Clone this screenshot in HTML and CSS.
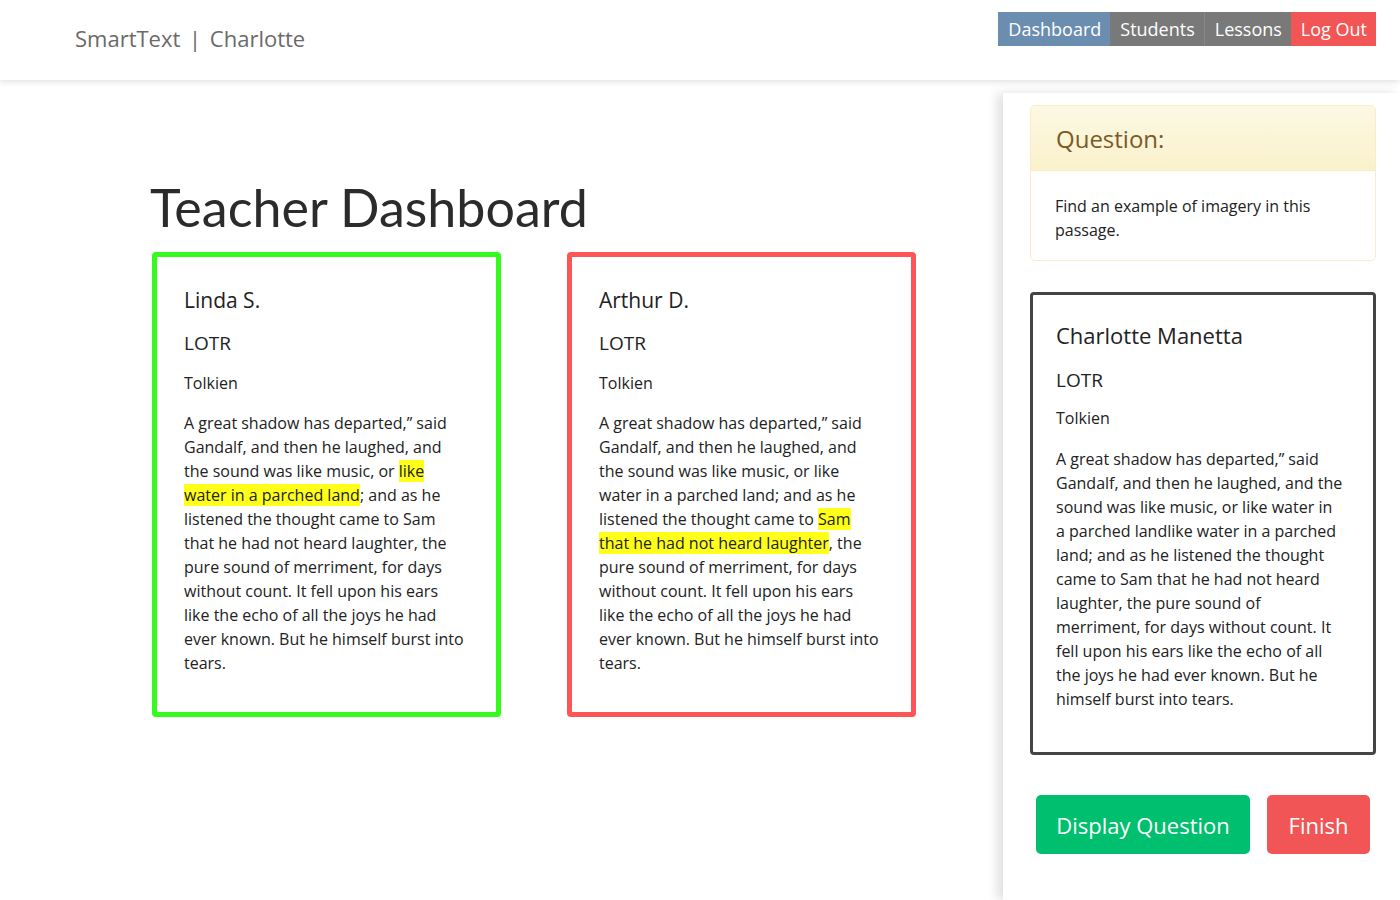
FILE: index.html
```html
<!DOCTYPE html>
<html lang="en">
<head>
<meta charset="utf-8">
<title>SmartText | Teacher Dashboard</title>
<link rel="stylesheet" href="styles.css">
</head>
<body>
<header class="topbar">
  <div class="brand">SmartText | Charlotte</div>
  <nav class="tabs">
    <a class="tab tab-active">Dashboard</a>
    <a class="tab tab-gray">Students</a>
    <a class="tab tab-gray">Lessons</a>
    <a class="tab tab-red">Log Out</a>
  </nav>
</header>
<div class="layout">
  <main class="content">
    <h1 class="page-title">Teacher Dashboard</h1>
    <div class="cards">
      <article class="card card-green">
        <h2 class="card-name">Linda S.</h2>
        <h3 class="card-book">LOTR</h3>
        <p class="card-author">Tolkien</p>
        <p class="card-text">A great shadow has departed,” said Gandalf, and then he laughed, and the sound was like music, or <mark class="hl">like water in a parched land</mark>; and as he listened the thought came to Sam that he had not heard laughter, the pure sound of merriment, for days without count. It fell upon his ears like the echo of all the joys he had ever known. But he himself burst into tears.</p>
      </article>
      <article class="card card-red">
        <h2 class="card-name">Arthur D.</h2>
        <h3 class="card-book">LOTR</h3>
        <p class="card-author">Tolkien</p>
        <p class="card-text">A great shadow has departed,” said Gandalf, and then he laughed, and the sound was like music, or like water in a parched land; and as he listened the thought came to <mark class="hl">Sam that he had not heard laughter</mark>, the pure sound of merriment, for days without count. It fell upon his ears like the echo of all the joys he had ever known. But he himself burst into tears.</p>
      </article>
    </div>
  </main>
  <aside class="sidebar">
    <section class="question">
      <div class="question-head">Question:</div>
      <div class="question-body">Find an example of imagery in this passage.</div>
    </section>
    <article class="student">
      <h2 class="student-name">Charlotte Manetta</h2>
      <h3 class="card-book">LOTR</h3>
      <p class="card-author">Tolkien</p>
      <p class="card-text">A great shadow has departed,” said Gandalf, and then he laughed, and the sound was like music, or like water in a parched landlike water in a parched land; and as he listened the thought came to Sam that he had not heard laughter, the pure sound of merriment, for days without count. It fell upon his ears like the echo of all the joys he had ever known. But he himself burst into tears.</p>
    </article>
    <div class="actions">
      <button class="btn btn-green">Display Question</button>
      <button class="btn btn-red">Finish</button>
    </div>
  </aside>
</div>
</body>
</html>
```

FILE: styles.css
```css
* { box-sizing: border-box; }
html, body { margin: 0; padding: 0; }
body {
  font-family: "Open Sans", "DejaVu Sans", sans-serif;
  color: #222;
  background: #fff;
  width: 1400px;
  height: 900px;
  overflow: hidden;
}
.topbar {
  height: 80px;
  display: flex;
  justify-content: space-between;
  align-items: flex-start;
  padding: 0 24px 0 75px;
  background: #fff;
  box-shadow: 0 2px 6px rgba(0,0,0,0.12);
  position: relative;
  z-index: 2;
}
.brand {
  font-size: 22px;
  color: #6a6a6a;
  margin-top: 23px;
  word-spacing: 3px;
}
.tabs {
  display: flex;
  margin-top: 12px;
  height: 34px;
}
.tab {
  display: flex;
  align-items: center;
  padding: 0 9px 0 10px;
  font-size: 18px;
  color: #fff;
  text-decoration: none;
}
.tab-active { background: #6a8db0; }
.tab-gray { background: #797979; }
.tab-gray + .tab-gray { border-left: 1px solid #888; }
.tab-red { background: #f25555; }

.layout {
  display: flex;
  height: 820px;
}
.content {
  flex: 1;
  padding-left: 150px;
}
.page-title {
  font-family: Lato, "Open Sans", sans-serif;
  font-weight: 400;
  font-size: 52px;
  color: #2b2b2b;
  margin: 94px 0 12px 0;
  line-height: 66px;
}
.cards {
  display: flex;
  gap: 66px;
  padding-left: 2px;
}
.card {
  width: 349px;
  height: 465px;
  border: 5px solid;
  border-radius: 4px;
  padding: 28px 29px 0 27px;
}
.card-green { border-color: #33fb1c; }
.card-red { border-color: #fd5555; }
.card-name {
  font-weight: 400;
  font-size: 21px;
  margin: 0;
  line-height: 30px;
}
.card-book {
  font-weight: 400;
  font-size: 19px;
  margin: 13px 0 0 0;
  line-height: 30px;
}
.card-author {
  font-size: 16px;
  margin: 13px 0 0 0;
  line-height: 24px;
}
.card-text {
  font-size: 16px;
  line-height: 24px;
  margin: 16px 0 0 0;
}
.hl {
  background: #ffff19;
  color: inherit;
}

.sidebar {
  width: 397px;
  margin-top: 13px;
  padding: 12px 24px 0 27px;
  background: #fff;
  box-shadow: -6px 0 10px rgba(0,0,0,0.12);
}
.question {
  border: 1px solid #faebcc;
  border-radius: 5px;
  overflow: hidden;
}
.question-head {
  height: 65px;
  padding: 0 25px;
  display: flex;
  align-items: center;
  font-size: 24px;
  color: #7a5a25;
  background: linear-gradient(#fcf8e3, #faf1cb);
  border-bottom: 1px solid #faebcc;
}
.question-body {
  padding: 23px 25px 18px 24px;
  font-size: 16px;
  line-height: 24px;
  color: #222;
}
.student {
  margin-top: 31px;
  height: 463px;
  border: 3px solid #444;
  border-radius: 4px;
  padding: 25px 30px 0 23px;
}
.student-name {
  font-weight: 400;
  font-size: 22px;
  margin: 0;
  line-height: 30px;
}
.student .card-book { margin-top: 15px; }
.student .card-author { margin-top: 11px; }
.student .card-text { margin-top: 17px; }
.actions {
  display: flex;
  gap: 17px;
  margin: 40px 0 0 6px;
}
.btn {
  height: 59px;
  border: none;
  border-radius: 5px;
  color: #fff;
  font-family: inherit;
  font-size: 22px;
  padding: 0;
  white-space: nowrap;
}
.btn-green { background: #00bf6e; width: 214px; }
.btn-red { background: #f25555; width: 103px; }
```
